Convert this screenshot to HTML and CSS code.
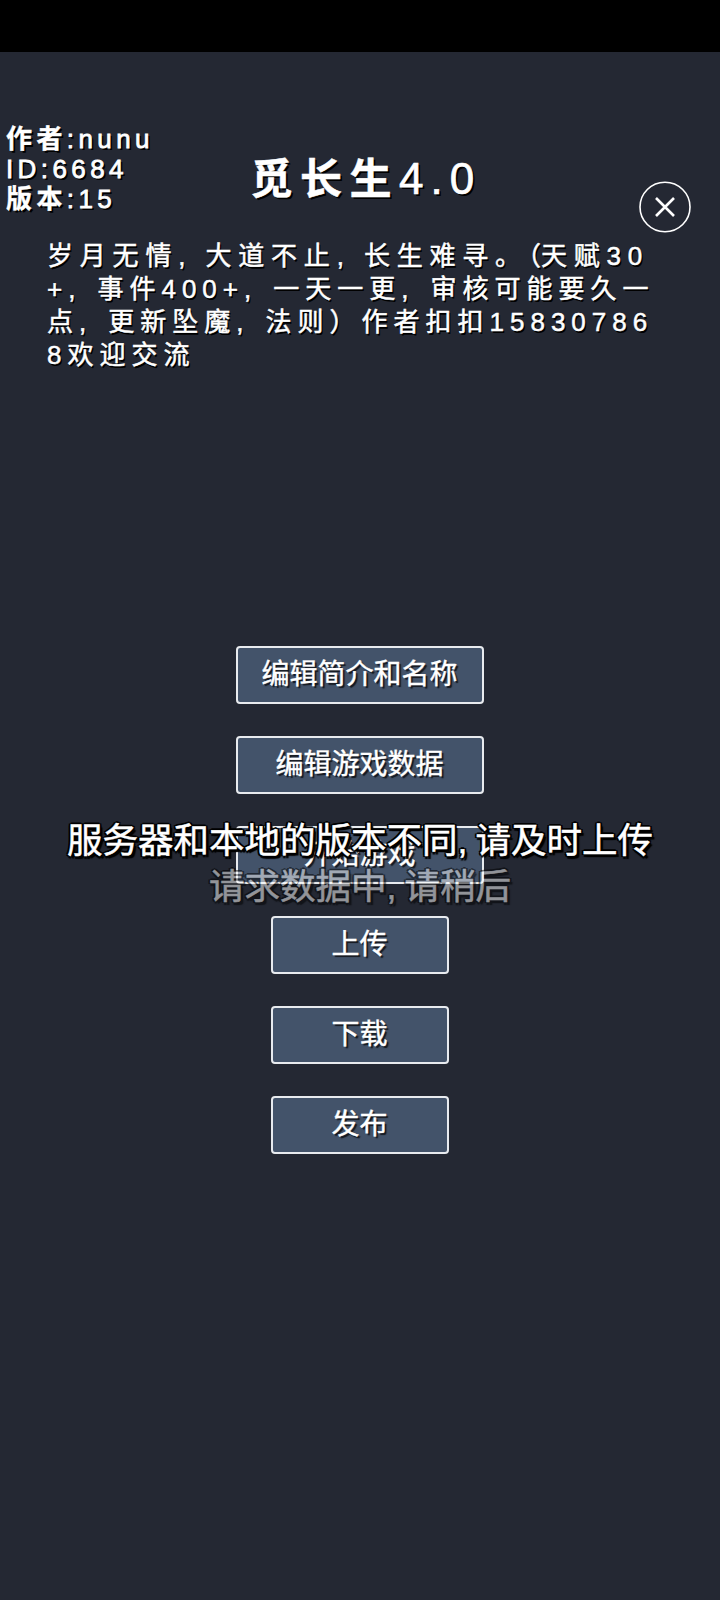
FILE: index.html
```html
<!DOCTYPE html>
<html lang="zh-CN">
<head>
<meta charset="utf-8">
<title>觅长生4.0</title>
<link rel="stylesheet" href="styles.css">
</head>
<body>
<div class="statusbar"></div>
<main class="screen">
  <header class="header">
    <div class="meta">
      <div><b>作者</b>:nunu</div>
      <div>ID:6684</div>
      <div><b>版本</b>:15</div>
    </div>
    <h1 class="title">觅长生<span class="title-num">4.0</span></h1>
    <button class="close" aria-label="关闭">
      <svg class="close-icon" viewBox="0 0 52 52"><ellipse cx="26" cy="26" rx="25" ry="24.8" fill="none" stroke="#fff" stroke-width="1.6"/><path d="M17 17 35 35M35 17 17 35" fill="none" stroke="#fff" stroke-width="2.6"/></svg>
    </button>
  </header>
  <div class="desc">
    <p class="line line-first">岁月无情<span class="c">,</span>大道不止<span class="c">,</span>长生难寻。<span class="p">（</span>天赋30</p>
    <p class="line">+<span class="c">,</span>事件400+<span class="c">,</span>一天一更<span class="c">,</span>审核可能要久一</p>
    <p class="line">点<span class="c">,</span>更新坠魔<span class="c">,</span>法则）作者扣扣15830786</p>
    <p class="line">8欢迎交流</p>
  </div>
  <nav class="actions">
    <button class="btn btn-wide">编辑简介和名称</button>
    <button class="btn btn-wide">编辑游戏数据</button>
    <button class="btn btn-wide">开始游戏</button>
    <button class="btn btn-narrow">上传</button>
    <button class="btn btn-narrow">下载</button>
    <button class="btn btn-narrow">发布</button>
  </nav>
  <div class="toasts">
    <div class="toast">服务器和本地的版本不同<span class="comma">,</span>请及时上传</div>
    <div class="toast toast-fade">请求数据中<span class="comma">,</span>请稍后</div>
  </div>
</main>
</body>
</html>
```
FILE: styles.css
```css
* { box-sizing: border-box; }
html, body { margin: 0; padding: 0; }
body {
  width: 720px;
  height: 1600px;
  overflow: hidden;
  background: #242833;
  color: #fff;
  font-family: "Liberation Sans", "Noto Sans CJK SC", sans-serif;
}
.statusbar { height: 52px; background: #000; }
.screen { position: relative; height: 1548px; }
.header {
  display: grid;
  grid-template-columns: 1fr auto 1fr;
  height: 188px;
  padding: 72px 3px 0 6px;
}
.meta {
  font-size: 26px;
  line-height: 30px;
  font-weight: 400;
  letter-spacing: 4.4px;
  -webkit-text-stroke: 0.8px #fff;
  text-shadow: 2px 2px 0 #000;
  white-space: nowrap;
}
.meta b { font-weight: 700; -webkit-text-stroke: 0.4px #fff; }
.title {
  margin: 25px 0 0 8.6px;
  font-size: 42px;
  line-height: 60px;
  font-weight: 700;
  letter-spacing: 7.5px;
  -webkit-text-stroke: 0.5px #fff;
  text-shadow: 2px 2px 0 #000;
  white-space: nowrap;
}
.title-num {
  font-size: 44px;
  font-weight: 400;
  letter-spacing: 7px;
  -webkit-text-stroke: 0.7px #fff;
}
.close {
  justify-self: end;
  width: 52px;
  height: 52px;
  margin: 57px 26px 0 0;
  padding: 0;
  border: 0;
  background: none;
}
.close-icon { display: block; width: 52px; height: 52px; }
.desc {
  padding-left: 47px;
  font-size: 26px;
  line-height: 33px;
  letter-spacing: 6px;
  -webkit-text-stroke: 0.5px #fff;
  text-shadow: 1.5px 1.5px 0 #000;
  white-space: nowrap;
}
.line { margin: 0; }
.line-first { letter-spacing: 6.8px; }
.c { letter-spacing: 22px; }
.line-first .c { letter-spacing: 20px; }
.p { letter-spacing: 0; }
.actions {
  display: flex;
  flex-direction: column;
  align-items: center;
  gap: 32px;
  margin-top: 274px;
  padding-right: 1px;
}
.btn {
  height: 58px;
  padding: 0;
  background: #43536a;
  border: 2px solid #e8ebef;
  border-radius: 4px;
  color: #fff;
  font-family: inherit;
  font-size: 28px;
  line-height: 1;
  -webkit-text-stroke: 0.4px #fff;
  text-shadow: 2px 2px 1px #14171d;
}
.btn-wide { width: 248px; }
.btn-narrow { width: 178px; }
.toasts {
  position: absolute;
  left: 0;
  right: 0;
  top: 766px;
  display: flex;
  flex-direction: column;
  align-items: center;
  gap: 0;
}
.toast {
  font-size: 35.5px;
  line-height: 46px;
  white-space: nowrap;
  -webkit-text-stroke: 0.5px #fff;
  text-shadow: -2px -1px 0 #000, 2px -1px 0 #000, -2px 1px 0 #000, 2px 1px 0 #000, 0 -2px 0 #000, 0 3px 1px #000, 3px 3px 1px #000;
}
.toast-fade { opacity: 0.5; }
.comma { letter-spacing: 8px; }
```
